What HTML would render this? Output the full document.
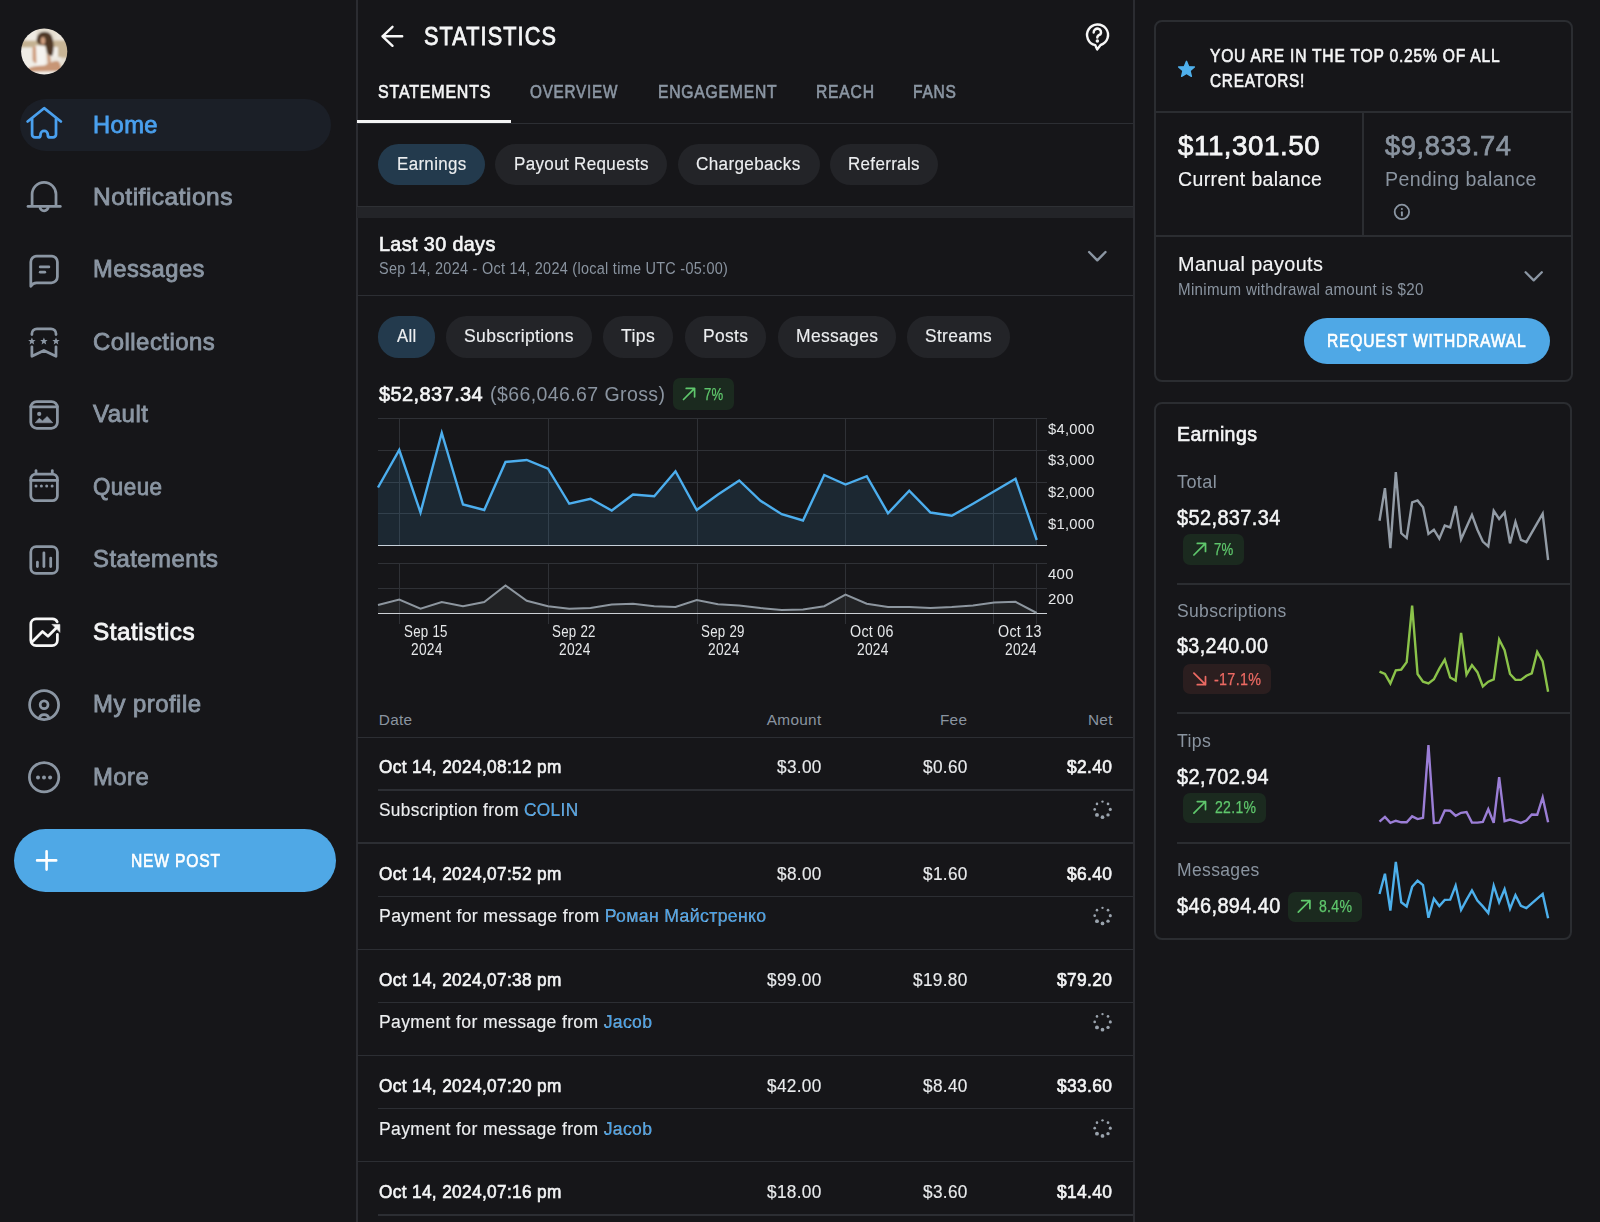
<!DOCTYPE html>
<html><head><meta charset="utf-8"><title>Statistics</title><style>*{margin:0;padding:0}
html,body{width:1600px;height:1222px;overflow:hidden;background:#161619}
body{position:relative;font-family:"Liberation Sans",sans-serif}
.t{position:absolute;white-space:nowrap}
.r{position:absolute}
svg{position:absolute;left:0;top:0}
</style></head><body>
<div class="r" style="left:19.50px;top:99.00px;width:311.00px;height:51.50px;background:#1b1f27;border-radius:26.00px;"></div>
<div class="t" style="left:93.20px;top:112.51px;font-size:24.44px;line-height:24.44px;color:#4aa0ee;font-weight:normal;letter-spacing:0.489px;transform:scaleX(0.9674);transform-origin:0.00px 0;-webkit-text-stroke:0.85px #4aa0ee;">Home</div>
<div class="t" style="left:93.20px;top:184.96px;font-size:24.44px;line-height:24.44px;color:#8b96a3;font-weight:normal;letter-spacing:0.489px;transform:scaleX(1.0036);transform-origin:0.00px 0;-webkit-text-stroke:0.85px #8b96a3;">Notifications</div>
<div class="t" style="left:93.20px;top:257.41px;font-size:24.44px;line-height:24.44px;color:#8b96a3;font-weight:normal;letter-spacing:0.489px;transform:scaleX(0.9710);transform-origin:0.00px 0;-webkit-text-stroke:0.85px #8b96a3;">Messages</div>
<div class="t" style="left:93.20px;top:329.86px;font-size:24.44px;line-height:24.44px;color:#8b96a3;font-weight:normal;letter-spacing:0.489px;transform:scaleX(0.9789);transform-origin:0.00px 0;-webkit-text-stroke:0.85px #8b96a3;">Collections</div>
<div class="t" style="left:93.20px;top:402.31px;font-size:24.44px;line-height:24.44px;color:#8b96a3;font-weight:normal;letter-spacing:0.489px;transform:scaleX(0.9848);transform-origin:0.00px 0;-webkit-text-stroke:0.85px #8b96a3;">Vault</div>
<div class="t" style="left:93.20px;top:474.76px;font-size:24.44px;line-height:24.44px;color:#8b96a3;font-weight:normal;letter-spacing:0.489px;transform:scaleX(0.9160);transform-origin:0.00px 0;-webkit-text-stroke:0.85px #8b96a3;">Queue</div>
<div class="t" style="left:93.20px;top:547.21px;font-size:24.44px;line-height:24.44px;color:#8b96a3;font-weight:normal;letter-spacing:0.489px;transform:scaleX(0.9764);transform-origin:0.00px 0;-webkit-text-stroke:0.85px #8b96a3;">Statements</div>
<div class="t" style="left:93.20px;top:619.66px;font-size:24.44px;line-height:24.44px;color:#f4f5f6;font-weight:normal;letter-spacing:0.489px;transform:scaleX(0.9942);transform-origin:0.00px 0;-webkit-text-stroke:0.85px #f4f5f6;">Statistics</div>
<div class="t" style="left:93.20px;top:692.11px;font-size:24.44px;line-height:24.44px;color:#8b96a3;font-weight:normal;letter-spacing:0.489px;transform:scaleX(0.9787);transform-origin:0.00px 0;-webkit-text-stroke:0.85px #8b96a3;">My profile</div>
<div class="t" style="left:93.20px;top:764.56px;font-size:24.44px;line-height:24.44px;color:#8b96a3;font-weight:normal;letter-spacing:0.489px;transform:scaleX(0.9765);transform-origin:0.00px 0;-webkit-text-stroke:0.85px #8b96a3;">More</div>
<div class="r" style="left:14.00px;top:829.00px;width:322.00px;height:63.00px;background:#4fa8e6;border-radius:32.00px;"></div>
<div class="t" style="left:131.40px;top:850.72px;font-size:18.99px;line-height:18.99px;color:#ffffff;font-weight:normal;letter-spacing:0.950px;transform:scaleX(0.8243);transform-origin:0.00px 0;-webkit-text-stroke:0.65px #ffffff;">NEW POST</div>
<div class="r" style="left:356.00px;top:0.00px;width:2.00px;height:1222.00px;background:#2b2c31;border-radius:0.00px;"></div>
<div class="t" style="left:424.25px;top:23.72px;font-size:25.14px;line-height:25.14px;color:#f4f5f6;font-weight:normal;letter-spacing:1.257px;transform:scaleX(0.8636);transform-origin:0.00px 0;-webkit-text-stroke:0.85px #f4f5f6;">STATISTICS</div>
<div class="t" style="left:377.50px;top:82.63px;font-size:18.16px;line-height:18.16px;color:#f4f5f6;font-weight:normal;letter-spacing:0.908px;transform:scaleX(0.8821);transform-origin:0.00px 0;-webkit-text-stroke:0.65px #f4f5f6;">STATEMENTS</div>
<div class="t" style="left:530.00px;top:82.63px;font-size:18.16px;line-height:18.16px;color:#8b96a3;font-weight:normal;letter-spacing:0.908px;transform:scaleX(0.8422);transform-origin:0.00px 0;-webkit-text-stroke:0.65px #8b96a3;">OVERVIEW</div>
<div class="t" style="left:657.50px;top:82.63px;font-size:18.16px;line-height:18.16px;color:#8b96a3;font-weight:normal;letter-spacing:0.908px;transform:scaleX(0.8645);transform-origin:0.00px 0;-webkit-text-stroke:0.65px #8b96a3;">ENGAGEMENT</div>
<div class="t" style="left:815.75px;top:82.63px;font-size:18.16px;line-height:18.16px;color:#8b96a3;font-weight:normal;letter-spacing:0.908px;transform:scaleX(0.8631);transform-origin:0.00px 0;-webkit-text-stroke:0.65px #8b96a3;">REACH</div>
<div class="t" style="left:913.25px;top:82.63px;font-size:18.16px;line-height:18.16px;color:#8b96a3;font-weight:normal;letter-spacing:0.908px;transform:scaleX(0.8575);transform-origin:0.00px 0;-webkit-text-stroke:0.65px #8b96a3;">FANS</div>
<div class="r" style="left:357.00px;top:123.00px;width:777.00px;height:1.00px;background:#2c2e33;border-radius:0.00px;"></div>
<div class="r" style="left:357.00px;top:120.00px;width:153.50px;height:3.00px;background:#f4f4f4;border-radius:0.00px;"></div>
<div class="r" style="left:378.00px;top:144.00px;width:106.50px;height:41.00px;background:#233a4d;border-radius:20.50px;"></div>
<div class="t" style="left:397.00px;top:154.79px;font-size:18.85px;line-height:18.85px;color:#eceef0;font-weight:normal;letter-spacing:0.377px;transform:scaleX(0.8987);transform-origin:0.00px 0;-webkit-text-stroke:0.15px #eceef0;">Earnings</div>
<div class="r" style="left:495.00px;top:144.00px;width:172.00px;height:41.00px;background:#232428;border-radius:20.50px;"></div>
<div class="t" style="left:513.75px;top:154.79px;font-size:18.85px;line-height:18.85px;color:#eceef0;font-weight:normal;letter-spacing:0.377px;transform:scaleX(0.9034);transform-origin:0.00px 0;-webkit-text-stroke:0.15px #eceef0;">Payout Requests</div>
<div class="r" style="left:677.50px;top:144.00px;width:142.00px;height:41.00px;background:#232428;border-radius:20.50px;"></div>
<div class="t" style="left:696.25px;top:154.79px;font-size:18.85px;line-height:18.85px;color:#eceef0;font-weight:normal;letter-spacing:0.377px;transform:scaleX(0.9076);transform-origin:0.00px 0;-webkit-text-stroke:0.15px #eceef0;">Chargebacks</div>
<div class="r" style="left:830.00px;top:144.00px;width:108.00px;height:41.00px;background:#232428;border-radius:20.50px;"></div>
<div class="t" style="left:848.00px;top:154.79px;font-size:18.85px;line-height:18.85px;color:#eceef0;font-weight:normal;letter-spacing:0.377px;transform:scaleX(0.8993);transform-origin:0.00px 0;-webkit-text-stroke:0.15px #eceef0;">Referrals</div>
<div class="r" style="left:357.00px;top:205.50px;width:777.00px;height:12.50px;background:#232428;border-radius:0.00px;"></div>
<div class="r" style="left:357.00px;top:205.50px;width:777.00px;height:1.00px;background:#2e3034;border-radius:0.00px;"></div>
<div class="t" style="left:378.75px;top:233.61px;font-size:20.25px;line-height:20.25px;color:#f4f5f6;font-weight:normal;letter-spacing:0.405px;transform:scaleX(0.9746);transform-origin:0.00px 0;-webkit-text-stroke:0.65px #f4f5f6;">Last 30 days</div>
<div class="t" style="left:378.75px;top:260.81px;font-size:16.76px;line-height:16.76px;color:#8a94a0;font-weight:normal;letter-spacing:0.335px;transform:scaleX(0.8613);transform-origin:0.00px 0;">Sep 14, 2024 - Oct 14, 2024 (local time UTC -05:00)</div>
<div class="r" style="left:357.00px;top:294.50px;width:777.00px;height:1.00px;background:#2c2e33;border-radius:0.00px;"></div>
<div class="r" style="left:378.00px;top:316.25px;width:57.00px;height:41.25px;background:#233a4d;border-radius:20.62px;"></div>
<div class="t" style="left:397.00px;top:327.04px;font-size:18.85px;line-height:18.85px;color:#eceef0;font-weight:normal;letter-spacing:0.377px;transform:scaleX(0.8870);transform-origin:0.00px 0;-webkit-text-stroke:0.15px #eceef0;">All</div>
<div class="r" style="left:446.25px;top:316.25px;width:145.75px;height:41.25px;background:#232428;border-radius:20.62px;"></div>
<div class="t" style="left:464.25px;top:327.04px;font-size:18.85px;line-height:18.85px;color:#eceef0;font-weight:normal;letter-spacing:0.377px;transform:scaleX(0.9303);transform-origin:0.00px 0;-webkit-text-stroke:0.15px #eceef0;">Subscriptions</div>
<div class="r" style="left:602.50px;top:316.25px;width:70.75px;height:41.25px;background:#232428;border-radius:20.62px;"></div>
<div class="t" style="left:621.25px;top:327.04px;font-size:18.85px;line-height:18.85px;color:#eceef0;font-weight:normal;letter-spacing:0.377px;transform:scaleX(0.9362);transform-origin:0.00px 0;-webkit-text-stroke:0.15px #eceef0;">Tips</div>
<div class="r" style="left:684.50px;top:316.25px;width:81.75px;height:41.25px;background:#232428;border-radius:20.62px;"></div>
<div class="t" style="left:703.00px;top:327.04px;font-size:18.85px;line-height:18.85px;color:#eceef0;font-weight:normal;letter-spacing:0.377px;transform:scaleX(0.9247);transform-origin:0.00px 0;-webkit-text-stroke:0.15px #eceef0;">Posts</div>
<div class="r" style="left:777.50px;top:316.25px;width:118.75px;height:41.25px;background:#232428;border-radius:20.62px;"></div>
<div class="t" style="left:795.50px;top:327.04px;font-size:18.85px;line-height:18.85px;color:#eceef0;font-weight:normal;letter-spacing:0.377px;transform:scaleX(0.9257);transform-origin:0.00px 0;-webkit-text-stroke:0.15px #eceef0;">Messages</div>
<div class="r" style="left:907.00px;top:316.25px;width:103.00px;height:41.25px;background:#232428;border-radius:20.62px;"></div>
<div class="t" style="left:925.00px;top:327.04px;font-size:18.85px;line-height:18.85px;color:#eceef0;font-weight:normal;letter-spacing:0.377px;transform:scaleX(0.9212);transform-origin:0.00px 0;-webkit-text-stroke:0.15px #eceef0;">Streams</div>
<div class="t" style="left:378.75px;top:383.61px;font-size:20.25px;line-height:20.25px;color:#f4f5f6;font-weight:normal;letter-spacing:0.405px;transform:scaleX(0.9881);transform-origin:0.00px 0;-webkit-text-stroke:0.65px #f4f5f6;">$52,837.34</div>
<div class="t" style="left:490.00px;top:383.61px;font-size:20.25px;line-height:20.25px;color:#8a94a0;font-weight:normal;letter-spacing:0.405px;transform:scaleX(0.9649);transform-origin:0.00px 0;">($66,046.67 Gross)</div>
<div class="r" style="left:672.50px;top:378.00px;width:61.25px;height:31.50px;background:#1b2a1f;border-radius:7.00px;"></div>
<div class="t" style="left:703.75px;top:385.54px;font-size:16.20px;line-height:16.20px;color:#5fc76c;font-weight:normal;letter-spacing:0.324px;transform:scaleX(0.8111);transform-origin:0.00px 0;-webkit-text-stroke:0.25px #5fc76c;">7%</div>
<div class="r" style="left:378.00px;top:418.25px;width:669.00px;height:1.00px;background:#2f3136;border-radius:0.00px;"></div>
<div class="r" style="left:378.00px;top:449.50px;width:669.00px;height:1.00px;background:#2f3136;border-radius:0.00px;"></div>
<div class="r" style="left:378.00px;top:481.50px;width:669.00px;height:1.00px;background:#2f3136;border-radius:0.00px;"></div>
<div class="r" style="left:378.00px;top:513.25px;width:669.00px;height:1.00px;background:#2f3136;border-radius:0.00px;"></div>
<div class="r" style="left:399.00px;top:418.75px;width:1.00px;height:126.75px;background:#2f3136;border-radius:0.00px;"></div>
<div class="r" style="left:547.50px;top:418.75px;width:1.00px;height:126.75px;background:#2f3136;border-radius:0.00px;"></div>
<div class="r" style="left:696.50px;top:418.75px;width:1.00px;height:126.75px;background:#2f3136;border-radius:0.00px;"></div>
<div class="r" style="left:845.00px;top:418.75px;width:1.00px;height:126.75px;background:#2f3136;border-radius:0.00px;"></div>
<div class="r" style="left:993.25px;top:418.75px;width:1.00px;height:126.75px;background:#2f3136;border-radius:0.00px;"></div>
<div class="r" style="left:1036.25px;top:418.75px;width:1.00px;height:126.75px;background:#2f3136;border-radius:0.00px;"></div>
<div class="r" style="left:378.00px;top:544.80px;width:669.00px;height:1.60px;background:#cfd3d8;border-radius:0.00px;"></div>
<div class="t" style="left:1047.50px;top:420.83px;font-size:15.08px;line-height:15.08px;color:#e6e8ea;font-weight:normal;letter-spacing:0.302px;transform:scaleX(0.9759);transform-origin:0.00px 0;">$4,000</div>
<div class="t" style="left:1047.50px;top:452.33px;font-size:15.08px;line-height:15.08px;color:#e6e8ea;font-weight:normal;letter-spacing:0.302px;transform:scaleX(0.9759);transform-origin:0.00px 0;">$3,000</div>
<div class="t" style="left:1047.50px;top:484.33px;font-size:15.08px;line-height:15.08px;color:#e6e8ea;font-weight:normal;letter-spacing:0.302px;transform:scaleX(0.9759);transform-origin:0.00px 0;">$2,000</div>
<div class="t" style="left:1047.50px;top:515.83px;font-size:15.08px;line-height:15.08px;color:#e6e8ea;font-weight:normal;letter-spacing:0.302px;transform:scaleX(0.9759);transform-origin:0.00px 0;">$1,000</div>
<div class="r" style="left:378.00px;top:563.25px;width:669.00px;height:1.00px;background:#2f3136;border-radius:0.00px;"></div>
<div class="r" style="left:378.00px;top:588.25px;width:669.00px;height:1.00px;background:#2f3136;border-radius:0.00px;"></div>
<div class="r" style="left:399.00px;top:563.75px;width:1.00px;height:60.00px;background:#2f3136;border-radius:0.00px;"></div>
<div class="r" style="left:547.50px;top:563.75px;width:1.00px;height:60.00px;background:#2f3136;border-radius:0.00px;"></div>
<div class="r" style="left:696.50px;top:563.75px;width:1.00px;height:60.00px;background:#2f3136;border-radius:0.00px;"></div>
<div class="r" style="left:845.00px;top:563.75px;width:1.00px;height:60.00px;background:#2f3136;border-radius:0.00px;"></div>
<div class="r" style="left:993.25px;top:563.75px;width:1.00px;height:60.00px;background:#2f3136;border-radius:0.00px;"></div>
<div class="r" style="left:1036.25px;top:563.75px;width:1.00px;height:60.00px;background:#2f3136;border-radius:0.00px;"></div>
<div class="r" style="left:378.00px;top:612.50px;width:669.00px;height:1.60px;background:#cfd3d8;border-radius:0.00px;"></div>
<div class="t" style="left:1047.50px;top:566.38px;font-size:15.08px;line-height:15.08px;color:#e6e8ea;font-weight:normal;letter-spacing:0.302px;transform:scaleX(0.9898);transform-origin:0.00px 0;">400</div>
<div class="t" style="left:1047.50px;top:591.38px;font-size:15.08px;line-height:15.08px;color:#e6e8ea;font-weight:normal;letter-spacing:0.302px;transform:scaleX(0.9898);transform-origin:0.00px 0;">200</div>
<div class="t" style="left:403.75px;top:624.26px;font-size:15.64px;line-height:15.64px;color:#e6e8ea;font-weight:normal;letter-spacing:0.313px;transform:scaleX(0.8507);transform-origin:0.00px 0;">Sep 15</div>
<div class="t" style="left:410.75px;top:641.76px;font-size:15.64px;line-height:15.64px;color:#e6e8ea;font-weight:normal;letter-spacing:0.313px;transform:scaleX(0.8813);transform-origin:0.00px 0;">2024</div>
<div class="t" style="left:552.00px;top:624.26px;font-size:15.64px;line-height:15.64px;color:#e6e8ea;font-weight:normal;letter-spacing:0.313px;transform:scaleX(0.8507);transform-origin:0.00px 0;">Sep 22</div>
<div class="t" style="left:559.00px;top:641.76px;font-size:15.64px;line-height:15.64px;color:#e6e8ea;font-weight:normal;letter-spacing:0.313px;transform:scaleX(0.8813);transform-origin:0.00px 0;">2024</div>
<div class="t" style="left:700.75px;top:624.26px;font-size:15.64px;line-height:15.64px;color:#e6e8ea;font-weight:normal;letter-spacing:0.313px;transform:scaleX(0.8507);transform-origin:0.00px 0;">Sep 29</div>
<div class="t" style="left:707.75px;top:641.76px;font-size:15.64px;line-height:15.64px;color:#e6e8ea;font-weight:normal;letter-spacing:0.313px;transform:scaleX(0.8813);transform-origin:0.00px 0;">2024</div>
<div class="t" style="left:849.50px;top:624.26px;font-size:15.64px;line-height:15.64px;color:#e6e8ea;font-weight:normal;letter-spacing:0.313px;transform:scaleX(0.9130);transform-origin:0.00px 0;">Oct 06</div>
<div class="t" style="left:856.50px;top:641.76px;font-size:15.64px;line-height:15.64px;color:#e6e8ea;font-weight:normal;letter-spacing:0.313px;transform:scaleX(0.8813);transform-origin:0.00px 0;">2024</div>
<div class="t" style="left:998.25px;top:624.26px;font-size:15.64px;line-height:15.64px;color:#e6e8ea;font-weight:normal;letter-spacing:0.313px;transform:scaleX(0.9130);transform-origin:0.00px 0;">Oct 13</div>
<div class="t" style="left:1005.25px;top:641.76px;font-size:15.64px;line-height:15.64px;color:#e6e8ea;font-weight:normal;letter-spacing:0.313px;transform:scaleX(0.8813);transform-origin:0.00px 0;">2024</div>
<div class="t" style="left:378.75px;top:711.50px;font-size:15.36px;line-height:15.36px;color:#8a94a0;font-weight:normal;letter-spacing:0.307px;">Date</div>
<div class="t" style="left:766.77px;top:711.50px;font-size:15.36px;line-height:15.36px;color:#8a94a0;font-weight:normal;letter-spacing:0.307px;">Amount</div>
<div class="t" style="left:939.91px;top:711.50px;font-size:15.36px;line-height:15.36px;color:#8a94a0;font-weight:normal;letter-spacing:0.307px;">Fee</div>
<div class="t" style="left:1087.98px;top:711.50px;font-size:15.36px;line-height:15.36px;color:#8a94a0;font-weight:normal;letter-spacing:0.307px;">Net</div>
<div class="r" style="left:357.00px;top:736.90px;width:777.00px;height:1.20px;background:#2c2e33;border-radius:0.00px;"></div>
<div class="t" style="left:378.75px;top:757.49px;font-size:19.20px;line-height:19.20px;color:#f4f5f6;font-weight:normal;letter-spacing:0.384px;transform:scaleX(0.8988);transform-origin:0.00px 0;-webkit-text-stroke:0.65px #f4f5f6;">Oct 14, 2024,08:12 pm</div>
<div class="t" style="left:776.85px;top:757.49px;font-size:19.20px;line-height:19.20px;color:#e9ebed;font-weight:normal;letter-spacing:0.384px;transform:scaleX(0.8954);transform-origin:0.00px 0;-webkit-text-stroke:0.15px #e9ebed;">$3.00</div>
<div class="t" style="left:922.60px;top:757.49px;font-size:19.20px;line-height:19.20px;color:#e9ebed;font-weight:normal;letter-spacing:0.384px;transform:scaleX(0.8954);transform-origin:0.00px 0;-webkit-text-stroke:0.15px #e9ebed;">$0.60</div>
<div class="t" style="left:1067.00px;top:757.49px;font-size:19.20px;line-height:19.20px;color:#f4f5f6;font-weight:normal;letter-spacing:0.384px;transform:scaleX(0.9075);transform-origin:0.00px 0;-webkit-text-stroke:0.65px #f4f5f6;">$2.40</div>
<div class="r" style="left:378.00px;top:789.40px;width:756.00px;height:1.20px;background:#2c2e33;border-radius:0.00px;"></div>
<div class="t" style="left:378.75px;top:799.99px;font-size:19.20px;line-height:19.20px;color:#f4f5f6;font-weight:normal;letter-spacing:0.384px;transform:scaleX(0.8979);transform-origin:0.00px 0;-webkit-text-stroke:0.15px #f4f5f6;"><span style="color:#eceef0">Subscription from </span><span style="color:#41a0ea">COLIN</span></div>
<div class="r" style="left:357.00px;top:842.40px;width:777.00px;height:1.20px;background:#2c2e33;border-radius:0.00px;"></div>
<div class="t" style="left:378.75px;top:863.74px;font-size:19.20px;line-height:19.20px;color:#f4f5f6;font-weight:normal;letter-spacing:0.384px;transform:scaleX(0.8988);transform-origin:0.00px 0;-webkit-text-stroke:0.65px #f4f5f6;">Oct 14, 2024,07:52 pm</div>
<div class="t" style="left:776.85px;top:863.74px;font-size:19.20px;line-height:19.20px;color:#e9ebed;font-weight:normal;letter-spacing:0.384px;transform:scaleX(0.8954);transform-origin:0.00px 0;-webkit-text-stroke:0.15px #e9ebed;">$8.00</div>
<div class="t" style="left:922.60px;top:863.74px;font-size:19.20px;line-height:19.20px;color:#e9ebed;font-weight:normal;letter-spacing:0.384px;transform:scaleX(0.8954);transform-origin:0.00px 0;-webkit-text-stroke:0.15px #e9ebed;">$1.60</div>
<div class="t" style="left:1067.00px;top:863.74px;font-size:19.20px;line-height:19.20px;color:#f4f5f6;font-weight:normal;letter-spacing:0.384px;transform:scaleX(0.9075);transform-origin:0.00px 0;-webkit-text-stroke:0.65px #f4f5f6;">$6.40</div>
<div class="r" style="left:378.00px;top:895.65px;width:756.00px;height:1.20px;background:#2c2e33;border-radius:0.00px;"></div>
<div class="t" style="left:378.75px;top:906.24px;font-size:19.20px;line-height:19.20px;color:#f4f5f6;font-weight:normal;letter-spacing:0.384px;transform:scaleX(0.9205);transform-origin:0.00px 0;-webkit-text-stroke:0.15px #f4f5f6;"><span style="color:#eceef0">Payment for message from </span><span style="color:#41a0ea">Роман Майстренко</span></div>
<div class="r" style="left:357.00px;top:948.65px;width:777.00px;height:1.20px;background:#2c2e33;border-radius:0.00px;"></div>
<div class="t" style="left:378.75px;top:969.99px;font-size:19.20px;line-height:19.20px;color:#f4f5f6;font-weight:normal;letter-spacing:0.384px;transform:scaleX(0.8988);transform-origin:0.00px 0;-webkit-text-stroke:0.65px #f4f5f6;">Oct 14, 2024,07:38 pm</div>
<div class="t" style="left:766.85px;top:969.99px;font-size:19.20px;line-height:19.20px;color:#e9ebed;font-weight:normal;letter-spacing:0.384px;transform:scaleX(0.8967);transform-origin:0.00px 0;-webkit-text-stroke:0.15px #e9ebed;">$99.00</div>
<div class="t" style="left:912.60px;top:969.99px;font-size:19.20px;line-height:19.20px;color:#e9ebed;font-weight:normal;letter-spacing:0.384px;transform:scaleX(0.8967);transform-origin:0.00px 0;-webkit-text-stroke:0.15px #e9ebed;">$19.80</div>
<div class="t" style="left:1057.00px;top:969.99px;font-size:19.20px;line-height:19.20px;color:#f4f5f6;font-weight:normal;letter-spacing:0.384px;transform:scaleX(0.9066);transform-origin:0.00px 0;-webkit-text-stroke:0.65px #f4f5f6;">$79.20</div>
<div class="r" style="left:378.00px;top:1001.90px;width:756.00px;height:1.20px;background:#2c2e33;border-radius:0.00px;"></div>
<div class="t" style="left:378.75px;top:1012.49px;font-size:19.20px;line-height:19.20px;color:#f4f5f6;font-weight:normal;letter-spacing:0.384px;transform:scaleX(0.9162);transform-origin:0.00px 0;-webkit-text-stroke:0.15px #f4f5f6;"><span style="color:#eceef0">Payment for message from </span><span style="color:#41a0ea">Jacob</span></div>
<div class="r" style="left:357.00px;top:1054.90px;width:777.00px;height:1.20px;background:#2c2e33;border-radius:0.00px;"></div>
<div class="t" style="left:378.75px;top:1076.24px;font-size:19.20px;line-height:19.20px;color:#f4f5f6;font-weight:normal;letter-spacing:0.384px;transform:scaleX(0.8988);transform-origin:0.00px 0;-webkit-text-stroke:0.65px #f4f5f6;">Oct 14, 2024,07:20 pm</div>
<div class="t" style="left:766.85px;top:1076.24px;font-size:19.20px;line-height:19.20px;color:#e9ebed;font-weight:normal;letter-spacing:0.384px;transform:scaleX(0.8967);transform-origin:0.00px 0;-webkit-text-stroke:0.15px #e9ebed;">$42.00</div>
<div class="t" style="left:922.60px;top:1076.24px;font-size:19.20px;line-height:19.20px;color:#e9ebed;font-weight:normal;letter-spacing:0.384px;transform:scaleX(0.8954);transform-origin:0.00px 0;-webkit-text-stroke:0.15px #e9ebed;">$8.40</div>
<div class="t" style="left:1057.00px;top:1076.24px;font-size:19.20px;line-height:19.20px;color:#f4f5f6;font-weight:normal;letter-spacing:0.384px;transform:scaleX(0.9066);transform-origin:0.00px 0;-webkit-text-stroke:0.65px #f4f5f6;">$33.60</div>
<div class="r" style="left:378.00px;top:1108.15px;width:756.00px;height:1.20px;background:#2c2e33;border-radius:0.00px;"></div>
<div class="t" style="left:378.75px;top:1118.74px;font-size:19.20px;line-height:19.20px;color:#f4f5f6;font-weight:normal;letter-spacing:0.384px;transform:scaleX(0.9162);transform-origin:0.00px 0;-webkit-text-stroke:0.15px #f4f5f6;"><span style="color:#eceef0">Payment for message from </span><span style="color:#41a0ea">Jacob</span></div>
<div class="r" style="left:357.00px;top:1161.15px;width:777.00px;height:1.20px;background:#2c2e33;border-radius:0.00px;"></div>
<div class="t" style="left:378.75px;top:1182.49px;font-size:19.20px;line-height:19.20px;color:#f4f5f6;font-weight:normal;letter-spacing:0.384px;transform:scaleX(0.8988);transform-origin:0.00px 0;-webkit-text-stroke:0.65px #f4f5f6;">Oct 14, 2024,07:16 pm</div>
<div class="t" style="left:766.85px;top:1182.49px;font-size:19.20px;line-height:19.20px;color:#e9ebed;font-weight:normal;letter-spacing:0.384px;transform:scaleX(0.8967);transform-origin:0.00px 0;-webkit-text-stroke:0.15px #e9ebed;">$18.00</div>
<div class="t" style="left:922.60px;top:1182.49px;font-size:19.20px;line-height:19.20px;color:#e9ebed;font-weight:normal;letter-spacing:0.384px;transform:scaleX(0.8954);transform-origin:0.00px 0;-webkit-text-stroke:0.15px #e9ebed;">$3.60</div>
<div class="t" style="left:1057.00px;top:1182.49px;font-size:19.20px;line-height:19.20px;color:#f4f5f6;font-weight:normal;letter-spacing:0.384px;transform:scaleX(0.9066);transform-origin:0.00px 0;-webkit-text-stroke:0.65px #f4f5f6;">$14.40</div>
<div class="r" style="left:378.00px;top:1214.40px;width:756.00px;height:1.20px;background:#2c2e33;border-radius:0.00px;"></div>
<div class="r" style="left:1133.35px;top:0.00px;width:1.30px;height:1222.00px;background:#2b2c31;border-radius:0.00px;"></div>
<div class="r" style="left:1154.00px;top:20.30px;width:418.80px;height:362.00px;background:transparent;border-radius:8.00px;border:2px solid #2b2d31;box-sizing:border-box;"></div>
<div class="t" style="left:1210.20px;top:45.88px;font-size:19.27px;line-height:19.27px;color:#f4f5f6;font-weight:normal;letter-spacing:0.964px;transform:scaleX(0.8105);transform-origin:0.00px 0;-webkit-text-stroke:0.65px #f4f5f6;">YOU ARE IN THE TOP 0.25% OF ALL</div>
<div class="t" style="left:1210.20px;top:71.38px;font-size:19.27px;line-height:19.27px;color:#f4f5f6;font-weight:normal;letter-spacing:0.964px;transform:scaleX(0.7966);transform-origin:0.00px 0;-webkit-text-stroke:0.65px #f4f5f6;">CREATORS!</div>
<div class="r" style="left:1155.00px;top:111.00px;width:417.00px;height:2.00px;background:#2b2d31;border-radius:0.00px;"></div>
<div class="r" style="left:1362.00px;top:112.00px;width:2.00px;height:124.30px;background:#2b2d31;border-radius:0.00px;"></div>
<div class="t" style="left:1177.50px;top:130.50px;font-size:28.35px;line-height:28.35px;color:#f4f5f6;font-weight:normal;letter-spacing:0.567px;transform:scaleX(0.9779);transform-origin:0.00px 0;-webkit-text-stroke:0.75px #f4f5f6;">$11,301.50</div>
<div class="t" style="left:1177.50px;top:168.52px;font-size:20.53px;line-height:20.53px;color:#f4f5f6;font-weight:normal;letter-spacing:0.411px;transform:scaleX(0.9485);transform-origin:0.00px 0;-webkit-text-stroke:0.15px #f4f5f6;">Current balance</div>
<div class="t" style="left:1385.30px;top:130.50px;font-size:28.35px;line-height:28.35px;color:#8a94a0;font-weight:normal;letter-spacing:0.567px;transform:scaleX(0.9642);transform-origin:0.00px 0;-webkit-text-stroke:0.75px #8a94a0;">$9,833.74</div>
<div class="t" style="left:1385.30px;top:168.52px;font-size:20.53px;line-height:20.53px;color:#8a94a0;font-weight:normal;letter-spacing:0.411px;transform:scaleX(0.9551);transform-origin:0.00px 0;">Pending balance</div>
<div class="r" style="left:1155.00px;top:235.30px;width:417.00px;height:2.00px;background:#2b2d31;border-radius:0.00px;"></div>
<div class="t" style="left:1177.50px;top:253.62px;font-size:20.53px;line-height:20.53px;color:#f4f5f6;font-weight:normal;letter-spacing:0.411px;transform:scaleX(0.9648);transform-origin:0.00px 0;-webkit-text-stroke:0.15px #f4f5f6;">Manual payouts</div>
<div class="t" style="left:1177.50px;top:281.00px;font-size:16.06px;line-height:16.06px;color:#8a94a0;font-weight:normal;letter-spacing:0.321px;transform:scaleX(0.9414);transform-origin:0.00px 0;">Minimum withdrawal amount is $20</div>
<div class="r" style="left:1304.00px;top:317.50px;width:245.60px;height:46.50px;background:#4fa8e6;border-radius:23.25px;"></div>
<div class="t" style="left:1327.40px;top:331.63px;font-size:18.16px;line-height:18.16px;color:#ffffff;font-weight:normal;letter-spacing:0.908px;transform:scaleX(0.8611);transform-origin:0.00px 0;-webkit-text-stroke:0.65px #ffffff;">REQUEST WITHDRAWAL</div>
<div class="r" style="left:1154.00px;top:402.20px;width:418.20px;height:538.20px;background:transparent;border-radius:8.00px;border:2px solid #2b2d31;box-sizing:border-box;"></div>
<div class="t" style="left:1177.00px;top:424.02px;font-size:20.53px;line-height:20.53px;color:#f4f5f6;font-weight:normal;letter-spacing:0.411px;transform:scaleX(0.9534);transform-origin:0.00px 0;-webkit-text-stroke:0.65px #f4f5f6;">Earnings</div>
<div class="t" style="left:1177.00px;top:472.08px;font-size:19.27px;line-height:19.27px;color:#8a94a0;font-weight:normal;letter-spacing:0.385px;transform:scaleX(0.9397);transform-origin:0.00px 0;">Total</div>
<div class="t" style="left:1177.00px;top:507.61px;font-size:21.37px;line-height:21.37px;color:#f4f5f6;font-weight:normal;letter-spacing:0.427px;transform:scaleX(0.9332);transform-origin:0.00px 0;-webkit-text-stroke:0.50px #f4f5f6;">$52,837.34</div>
<div class="r" style="left:1183.40px;top:534.00px;width:60.60px;height:30.80px;background:#1b2a1f;border-radius:7.00px;"></div>
<div class="t" style="left:1214.40px;top:541.29px;font-size:16.20px;line-height:16.20px;color:#5fc76c;font-weight:normal;letter-spacing:0.324px;transform:scaleX(0.8153);transform-origin:0.00px 0;-webkit-text-stroke:0.25px #5fc76c;">7%</div>
<div class="t" style="left:1177.00px;top:601.38px;font-size:19.27px;line-height:19.27px;color:#8a94a0;font-weight:normal;letter-spacing:0.385px;transform:scaleX(0.9084);transform-origin:0.00px 0;">Subscriptions</div>
<div class="t" style="left:1177.00px;top:636.31px;font-size:21.37px;line-height:21.37px;color:#f4f5f6;font-weight:normal;letter-spacing:0.427px;transform:scaleX(0.9240);transform-origin:0.00px 0;-webkit-text-stroke:0.50px #f4f5f6;">$3,240.00</div>
<div class="r" style="left:1183.40px;top:663.60px;width:87.60px;height:30.80px;background:#2b1e1f;border-radius:7.00px;"></div>
<div class="t" style="left:1214.00px;top:670.99px;font-size:16.20px;line-height:16.20px;color:#ec6a63;font-weight:normal;letter-spacing:0.324px;transform:scaleX(0.8877);transform-origin:0.00px 0;-webkit-text-stroke:0.25px #ec6a63;">-17.1%</div>
<div class="t" style="left:1177.00px;top:730.68px;font-size:19.27px;line-height:19.27px;color:#8a94a0;font-weight:normal;letter-spacing:0.385px;transform:scaleX(0.9172);transform-origin:0.00px 0;">Tips</div>
<div class="t" style="left:1177.00px;top:767.11px;font-size:21.37px;line-height:21.37px;color:#f4f5f6;font-weight:normal;letter-spacing:0.427px;transform:scaleX(0.9311);transform-origin:0.00px 0;-webkit-text-stroke:0.50px #f4f5f6;">$2,702.94</div>
<div class="r" style="left:1183.40px;top:793.40px;width:82.30px;height:30.00px;background:#1b2a1f;border-radius:7.00px;"></div>
<div class="t" style="left:1214.60px;top:799.39px;font-size:16.20px;line-height:16.20px;color:#5fc76c;font-weight:normal;letter-spacing:0.324px;transform:scaleX(0.8682);transform-origin:0.00px 0;-webkit-text-stroke:0.25px #5fc76c;">22.1%</div>
<div class="t" style="left:1177.00px;top:860.48px;font-size:19.27px;line-height:19.27px;color:#8a94a0;font-weight:normal;letter-spacing:0.385px;transform:scaleX(0.9089);transform-origin:0.00px 0;">Messages</div>
<div class="t" style="left:1177.00px;top:896.41px;font-size:21.37px;line-height:21.37px;color:#f4f5f6;font-weight:normal;letter-spacing:0.427px;transform:scaleX(0.9332);transform-origin:0.00px 0;-webkit-text-stroke:0.50px #f4f5f6;">$46,894.40</div>
<div class="r" style="left:1287.80px;top:891.50px;width:74.20px;height:30.90px;background:#1b2a1f;border-radius:7.00px;"></div>
<div class="t" style="left:1318.90px;top:898.39px;font-size:16.20px;line-height:16.20px;color:#5fc76c;font-weight:normal;letter-spacing:0.324px;transform:scaleX(0.8708);transform-origin:0.00px 0;-webkit-text-stroke:0.25px #5fc76c;">8.4%</div>
<div class="r" style="left:1177.00px;top:582.90px;width:394.00px;height:2.00px;background:#2b2d31;border-radius:0.00px;"></div>
<div class="r" style="left:1177.00px;top:712.10px;width:394.00px;height:2.00px;background:#2b2d31;border-radius:0.00px;"></div>
<div class="r" style="left:1177.00px;top:842.10px;width:394.00px;height:2.00px;background:#2b2d31;border-radius:0.00px;"></div>
<svg width="1600" height="1222" viewBox="0 0 1600 1222">
<defs><clipPath id="av"><circle cx="44.2" cy="51.5" r="23.1"/></clipPath>
<filter id="avb" x="-10%" y="-10%" width="120%" height="120%"><feGaussianBlur stdDeviation="0.9"/></filter></defs>
<g clip-path="url(#av)"><g filter="url(#avb)">
<rect x="18" y="26" width="53" height="52" fill="#e6dfd2"/>
<rect x="26" y="28" width="10" height="13" fill="#efebe3"/>
<rect x="56" y="28" width="10" height="13" fill="#ece6dc"/>
<rect x="18" y="40.7" width="53" height="7" fill="#c5b292"/>
<rect x="55" y="40.7" width="16" height="17" fill="#c8b596"/>
<rect x="18" y="47.5" width="19" height="22" fill="#f0ede6"/>
<rect x="50" y="47" width="8" height="12" fill="#f2efe9"/>
<rect x="45" y="57" width="16" height="10" fill="#ece8e0"/>
<path d="M36.5,40 Q37,32 44.5,31.8 Q52,32 53,40 Q54.5,48 52.5,55.5 Q49,57 47,53 Q46,47 45.5,45.5 L41,45 Q37,44 36.5,40Z" fill="#4f3828"/>
<ellipse cx="43" cy="40.8" rx="2.3" ry="3.8" fill="#cf9f80"/>
<path d="M34,46.5 Q36,45 38,45.5 L45,46 Q46.5,52 45.5,58 L44.5,66.5 L36,66.5 Q33.5,56 34,46.5Z" fill="#f5f3ef"/>
<path d="M32.5,47.5 Q34,45.5 36,46.5 L36.5,63 Q34,64 32.5,60Z" fill="#cf9f80"/>
<path d="M47,54 L50.5,57 L51,67 L48,67Z" fill="#cc9c7c"/>
<path d="M24,73 Q28,66.5 37,66 L45,65.5 Q52,60.5 58,61 Q61.5,64 61,71 L59,76 L24,76Z" fill="#c89676"/>
<path d="M18,72 L62,71 L62,80 L18,80Z" fill="#f2efe9"/>
</g></g>
<path d="M27.6,121.5 L44.1,108.2 L60.9,121.5" fill="none" stroke="#4aa0ee" stroke-width="2.75" stroke-linecap="round" stroke-linejoin="round" stroke-miterlimit="4" />
<path d="M32.1,119 V134.4 A3,3 0 0 0 35.1,137.4 H38 A2.5,2.5 0 0 0 40.5,134.9 V134.5 A3.65,3.65 0 0 1 47.8,134.5 V134.9 A2.5,2.5 0 0 0 50.3,137.4 H53 A3,3 0 0 0 56,134.4 V119" fill="none" stroke="#4aa0ee" stroke-width="2.75" stroke-linecap="round" stroke-linejoin="round" stroke-miterlimit="4" />
<path d="M32.1,205 V194.3 A11.95,11.95 0 0 1 56,194.3 V205" fill="none" stroke="#8b96a3" stroke-width="2.75" stroke-linecap="round" stroke-linejoin="round" stroke-miterlimit="4" />
<path d="M28,206.4 H60.3" fill="none" stroke="#8b96a3" stroke-width="2.75" stroke-linecap="round" stroke-linejoin="round" stroke-miterlimit="4" />
<path d="M39.9,206.6 A4.2,4.2 0 0 0 48.3,206.6" fill="none" stroke="#8b96a3" stroke-width="2.75" stroke-linecap="round" stroke-linejoin="round" stroke-miterlimit="4" />
<path d="M30.8,286.3 V262 A6,6 0 0 1 36.8,256 H51.4 A6,6 0 0 1 57.4,262 V276.8 A6,6 0 0 1 51.4,282.8 H36.5 Q32.8,282.8 30.8,286.3 Z" fill="none" stroke="#8b96a3" stroke-width="2.75" stroke-linecap="round" stroke-linejoin="round" stroke-miterlimit="4" />
<path d="M40.2,266.9 H48.9" fill="none" stroke="#8b96a3" stroke-width="2.75" stroke-linecap="round" stroke-linejoin="round" stroke-miterlimit="4" />
<path d="M40.2,272.2 H44.8" fill="none" stroke="#8b96a3" stroke-width="2.75" stroke-linecap="round" stroke-linejoin="round" stroke-miterlimit="4" />
<path d="M31.9,334.6 V333.8 A5,5 0 0 1 36.9,328.8 H51 A5,5 0 0 1 56,333.8 V334.6" fill="none" stroke="#8b96a3" stroke-width="2.75" stroke-linecap="round" stroke-linejoin="round" stroke-miterlimit="4" />
<path d="M31.9,346.8 V356.3 L43.9,350.4 L56,356.3 V346.8" fill="none" stroke="#8b96a3" stroke-width="2.75" stroke-linecap="round" stroke-linejoin="round" stroke-miterlimit="4" />
<path d="M31.90,337.40 L32.93,339.88 L35.61,340.09 L33.56,341.84 L34.19,344.46 L31.90,343.05 L29.61,344.46 L30.24,341.84 L28.19,340.09 L30.87,339.88Z" fill="#8b96a3" />
<path d="M43.90,337.40 L44.93,339.88 L47.61,340.09 L45.56,341.84 L46.19,344.46 L43.90,343.05 L41.61,344.46 L42.24,341.84 L40.19,340.09 L42.87,339.88Z" fill="#8b96a3" />
<path d="M56.00,337.40 L57.03,339.88 L59.71,340.09 L57.66,341.84 L58.29,344.46 L56.00,343.05 L53.71,344.46 L54.34,341.84 L52.29,340.09 L54.97,339.88Z" fill="#8b96a3" />
<path d="M30.8,407.5 A6,6 0 0 1 36.8,401.5 H51.4 A6,6 0 0 1 57.4,407.5 V422.3 A6,6 0 0 1 51.4,428.3 H36.8 A6,6 0 0 1 30.8,422.3 Z" fill="none" stroke="#8b96a3" stroke-width="2.75" stroke-linecap="round" stroke-linejoin="round" stroke-miterlimit="4" />
<path d="M30.8,406.8 H57.4" fill="none" stroke="#8b96a3" stroke-width="2.75" stroke-linecap="round" stroke-linejoin="round" stroke-miterlimit="4" />
<circle cx="39.2" cy="413.9" r="2.1" fill="#8b96a3"/>
<path d="M35.6,422.4 L39.2,418.3 L42.5,420.9 L47.2,416.6 L52.4,422.4 Z" fill="#8b96a3" stroke="#8b96a3" stroke-width="0.80" stroke-linecap="round" stroke-linejoin="round" stroke-miterlimit="4" />
<path d="M30.8,479 A5,5 0 0 1 35.8,474 H52.4 A5,5 0 0 1 57.4,479 V495.7 A5,5 0 0 1 52.4,500.7 H35.8 A5,5 0 0 1 30.8,495.7 Z" fill="none" stroke="#8b96a3" stroke-width="2.75" stroke-linecap="round" stroke-linejoin="round" stroke-miterlimit="4" />
<path d="M30.8,480.4 H57.4" fill="none" stroke="#8b96a3" stroke-width="2.75" stroke-linecap="round" stroke-linejoin="round" stroke-miterlimit="4" />
<path d="M36,470.6 V473.5" fill="none" stroke="#8b96a3" stroke-width="2.75" stroke-linecap="round" stroke-linejoin="round" stroke-miterlimit="4" />
<path d="M52.3,470.6 V473.5" fill="none" stroke="#8b96a3" stroke-width="2.75" stroke-linecap="round" stroke-linejoin="round" stroke-miterlimit="4" />
<circle cx="36.0" cy="485.9" r="1.5" fill="#8b96a3"/>
<circle cx="41.4" cy="485.9" r="1.5" fill="#8b96a3"/>
<circle cx="46.7" cy="485.9" r="1.5" fill="#8b96a3"/>
<circle cx="52.1" cy="485.9" r="1.5" fill="#8b96a3"/>
<path d="M30.8,552 A5.3,5.3 0 0 1 36.1,546.7 H52.1 A5.3,5.3 0 0 1 57.4,552 V568 A5.3,5.3 0 0 1 52.1,573.3 H36.1 A5.3,5.3 0 0 1 30.8,568 Z" fill="none" stroke="#8b96a3" stroke-width="2.75" stroke-linecap="round" stroke-linejoin="round" stroke-miterlimit="4" />
<path d="M37.4,562.2 V566.6" fill="none" stroke="#8b96a3" stroke-width="2.75" stroke-linecap="round" stroke-linejoin="round" stroke-miterlimit="4" />
<path d="M43.9,552.8 V566.6" fill="none" stroke="#8b96a3" stroke-width="2.75" stroke-linecap="round" stroke-linejoin="round" stroke-miterlimit="4" />
<path d="M50.7,558 V566.6" fill="none" stroke="#8b96a3" stroke-width="2.75" stroke-linecap="round" stroke-linejoin="round" stroke-miterlimit="4" />
<path d="M57.2,621.8 A5.3,5.3 0 0 0 52.1,618.9 H36.1 A5.3,5.3 0 0 0 30.8,624.2 V640.2 A5.3,5.3 0 0 0 36.1,645.5 H52.1 A5.3,5.3 0 0 0 57.4,640.2 V634.4" fill="none" stroke="#f7f7f7" stroke-width="2.75" stroke-linecap="round" stroke-linejoin="round" stroke-miterlimit="4" />
<path d="M32.3,641.8 L42.5,631.5 L48,636.2 L56.2,628" fill="none" stroke="#f7f7f7" stroke-width="2.75" stroke-linecap="round" stroke-linejoin="round" stroke-miterlimit="4" />
<path d="M52.3,624.4 L59.9,624.4 L59.9,632 Z" fill="#f7f7f7" stroke="#f7f7f7" stroke-width="0.60" stroke-linecap="round" stroke-linejoin="round" stroke-miterlimit="4" />
<circle cx="44.1" cy="705" r="14.5" fill="none" stroke="#8b96a3" stroke-width="2.75"/>
<circle cx="44.1" cy="704.7" r="3.9" fill="none" stroke="#8b96a3" stroke-width="2.75"/>
<path d="M39.2,718.6 A5,5 0 0 1 49,718.6" fill="none" stroke="#8b96a3" stroke-width="2.75" stroke-linecap="round" stroke-linejoin="round" stroke-miterlimit="4" />
<circle cx="44.1" cy="777.2" r="14.7" fill="none" stroke="#8b96a3" stroke-width="2.75"/>
<circle cx="38.0" cy="777.4" r="2.0" fill="#8b96a3"/>
<circle cx="44.0" cy="777.4" r="2.0" fill="#8b96a3"/>
<circle cx="50.1" cy="777.4" r="2.0" fill="#8b96a3"/>
<path d="M46.6,851.2 V869.6 M37.1,860.4 H56.2" fill="none" stroke="#ffffff" stroke-width="2.60" stroke-linecap="round" stroke-linejoin="round" stroke-miterlimit="4" />
<path d="M402.2,36.3 H382.5 M392.5,26.8 L382.5,36.3 L392.5,45.8" fill="none" stroke="#f7f7f7" stroke-width="2.40" stroke-linecap="round" stroke-linejoin="round" stroke-miterlimit="4" />
<path d="M1095.3,45.2 A10.5,10.5 0 1 1 1100.6,45 L1097.1,49.4 Z" fill="none" stroke="#f7f7f7" stroke-width="2.40" stroke-linecap="round" stroke-linejoin="round" stroke-miterlimit="4" />
<path d="M1093.7,32.4 A3.65,3.65 0 1 1 1100.4,34.3 Q1097.3,35.6 1097.3,37.4" fill="none" stroke="#f7f7f7" stroke-width="2.50" stroke-linecap="round" stroke-linejoin="round" stroke-miterlimit="4" />
<circle cx="1097.35" cy="40.9" r="1.75" fill="#f7f7f7"/>
<path d="M1089.1,252 L1097.3,260.3 L1105.5,252" fill="none" stroke="#8b96a3" stroke-width="2.40" stroke-linecap="round" stroke-linejoin="round" stroke-miterlimit="4" />
<path d="M683.5,399.5 L694.6,388.4 M686.2,388.4 H694.6 V396.8" fill="none" stroke="#5fc76c" stroke-width="1.70" stroke-linecap="round" stroke-linejoin="round" stroke-miterlimit="4" />
<path d="M378.00,487.50 L399.25,450.00 L420.50,512.50 L441.75,433.00 L463.00,504.50 L484.25,510.00 L505.50,462.00 L526.75,460.00 L548.00,468.75 L569.25,503.75 L590.50,498.75 L611.75,510.50 L633.00,494.50 L654.25,496.25 L675.50,471.25 L696.75,510.00 L718.00,494.50 L739.25,480.50 L760.50,500.75 L781.75,514.25 L803.00,520.50 L824.25,475.00 L845.50,484.50 L866.75,476.25 L888.00,513.25 L909.25,490.75 L930.50,512.50 L951.75,515.75 L973.00,503.75 L994.25,491.25 L1015.50,478.75 L1036.75,540.00 L1036.75,545.5 L378,545.5 Z" fill="rgba(76,174,238,0.12)" />
<path d="M378.00,487.50 L399.25,450.00 L420.50,512.50 L441.75,433.00 L463.00,504.50 L484.25,510.00 L505.50,462.00 L526.75,460.00 L548.00,468.75 L569.25,503.75 L590.50,498.75 L611.75,510.50 L633.00,494.50 L654.25,496.25 L675.50,471.25 L696.75,510.00 L718.00,494.50 L739.25,480.50 L760.50,500.75 L781.75,514.25 L803.00,520.50 L824.25,475.00 L845.50,484.50 L866.75,476.25 L888.00,513.25 L909.25,490.75 L930.50,512.50 L951.75,515.75 L973.00,503.75 L994.25,491.25 L1015.50,478.75 L1036.75,540.00" fill="none" stroke="#4caeee" stroke-width="2.40" stroke-linecap="butt" stroke-linejoin="miter" stroke-miterlimit="4" />
<path d="M378.00,605.00 L399.25,599.50 L420.50,608.75 L441.75,602.00 L463.00,606.25 L484.25,602.00 L505.50,585.50 L526.75,600.75 L548.00,606.25 L569.25,608.75 L590.50,608.00 L611.75,604.50 L633.00,603.75 L654.25,606.25 L675.50,607.00 L696.75,600.00 L718.00,604.25 L739.25,605.50 L760.50,608.00 L781.75,610.00 L803.00,609.50 L824.25,606.25 L845.50,594.50 L866.75,603.75 L888.00,607.00 L909.25,607.00 L930.50,608.00 L951.75,607.00 L973.00,605.50 L994.25,602.50 L1015.50,601.75 L1036.75,613.00 L1036.75,613.25 L378,613.25 Z" fill="rgba(141,150,159,0.09)" />
<path d="M378.00,605.00 L399.25,599.50 L420.50,608.75 L441.75,602.00 L463.00,606.25 L484.25,602.00 L505.50,585.50 L526.75,600.75 L548.00,606.25 L569.25,608.75 L590.50,608.00 L611.75,604.50 L633.00,603.75 L654.25,606.25 L675.50,607.00 L696.75,600.00 L718.00,604.25 L739.25,605.50 L760.50,608.00 L781.75,610.00 L803.00,609.50 L824.25,606.25 L845.50,594.50 L866.75,603.75 L888.00,607.00 L909.25,607.00 L930.50,608.00 L951.75,607.00 L973.00,605.50 L994.25,602.50 L1015.50,601.75 L1036.75,613.00" fill="none" stroke="#8d969f" stroke-width="2.00" stroke-linecap="butt" stroke-linejoin="miter" stroke-miterlimit="4" />
<circle cx="1102.50" cy="801.60" r="1.20" fill="#9aa3ad"/>
<circle cx="1108.02" cy="803.88" r="1.35" fill="#9aa3ad"/>
<circle cx="1110.30" cy="809.40" r="1.55" fill="#9aa3ad"/>
<circle cx="1108.02" cy="814.92" r="1.70" fill="#9aa3ad"/>
<circle cx="1102.50" cy="817.20" r="1.85" fill="#9aa3ad"/>
<circle cx="1096.98" cy="814.92" r="1.95" fill="#9aa3ad"/>
<circle cx="1094.70" cy="809.40" r="1.35" fill="#9aa3ad"/>
<circle cx="1096.98" cy="803.88" r="1.30" fill="#9aa3ad"/>
<circle cx="1102.50" cy="907.85" r="1.20" fill="#9aa3ad"/>
<circle cx="1108.02" cy="910.13" r="1.35" fill="#9aa3ad"/>
<circle cx="1110.30" cy="915.65" r="1.55" fill="#9aa3ad"/>
<circle cx="1108.02" cy="921.17" r="1.70" fill="#9aa3ad"/>
<circle cx="1102.50" cy="923.45" r="1.85" fill="#9aa3ad"/>
<circle cx="1096.98" cy="921.17" r="1.95" fill="#9aa3ad"/>
<circle cx="1094.70" cy="915.65" r="1.35" fill="#9aa3ad"/>
<circle cx="1096.98" cy="910.13" r="1.30" fill="#9aa3ad"/>
<circle cx="1102.50" cy="1014.10" r="1.20" fill="#9aa3ad"/>
<circle cx="1108.02" cy="1016.38" r="1.35" fill="#9aa3ad"/>
<circle cx="1110.30" cy="1021.90" r="1.55" fill="#9aa3ad"/>
<circle cx="1108.02" cy="1027.42" r="1.70" fill="#9aa3ad"/>
<circle cx="1102.50" cy="1029.70" r="1.85" fill="#9aa3ad"/>
<circle cx="1096.98" cy="1027.42" r="1.95" fill="#9aa3ad"/>
<circle cx="1094.70" cy="1021.90" r="1.35" fill="#9aa3ad"/>
<circle cx="1096.98" cy="1016.38" r="1.30" fill="#9aa3ad"/>
<circle cx="1102.50" cy="1120.35" r="1.20" fill="#9aa3ad"/>
<circle cx="1108.02" cy="1122.63" r="1.35" fill="#9aa3ad"/>
<circle cx="1110.30" cy="1128.15" r="1.55" fill="#9aa3ad"/>
<circle cx="1108.02" cy="1133.67" r="1.70" fill="#9aa3ad"/>
<circle cx="1102.50" cy="1135.95" r="1.85" fill="#9aa3ad"/>
<circle cx="1096.98" cy="1133.67" r="1.95" fill="#9aa3ad"/>
<circle cx="1094.70" cy="1128.15" r="1.35" fill="#9aa3ad"/>
<circle cx="1096.98" cy="1122.63" r="1.30" fill="#9aa3ad"/>
<path d="M1186.50,61.30 L1188.67,66.61 L1194.39,67.04 L1190.02,70.74 L1191.38,76.31 L1186.50,73.30 L1181.62,76.31 L1182.98,70.74 L1178.61,67.04 L1184.33,66.61Z" fill="#4fb0ec" stroke="#4fb0ec" stroke-width="1.40" stroke-linecap="round" stroke-linejoin="round" stroke-miterlimit="4" />
<circle cx="1401.9" cy="211.9" r="7.2" fill="none" stroke="#8b96a3" stroke-width="1.8"/>
<path d="M1401.9,212.2 V215.4" fill="none" stroke="#8b96a3" stroke-width="1.90" stroke-linecap="round" stroke-linejoin="round" stroke-miterlimit="4" />
<circle cx="1401.9" cy="209" r="1.0" fill="#8b96a3"/>
<path d="M1525.6,272.3 L1533.7,280.4 L1541.8,272.3" fill="none" stroke="#8b96a3" stroke-width="2.30" stroke-linecap="round" stroke-linejoin="round" stroke-miterlimit="4" />
<path d="M1193.90,555.00 L1205.50,543.40 M1197.30,543.40 H1205.50 V551.40" fill="none" stroke="#5fc76c" stroke-width="1.75" stroke-linecap="round" stroke-linejoin="round" stroke-miterlimit="4" />
<path d="M1193.90,673.10 L1205.50,684.70 M1197.30,684.70 H1205.50 V676.70" fill="none" stroke="#ec6a63" stroke-width="1.75" stroke-linecap="round" stroke-linejoin="round" stroke-miterlimit="4" />
<path d="M1193.90,813.10 L1205.50,801.50 M1197.30,801.50 H1205.50 V809.50" fill="none" stroke="#5fc76c" stroke-width="1.75" stroke-linecap="round" stroke-linejoin="round" stroke-miterlimit="4" />
<path d="M1298.30,912.10 L1309.90,900.50 M1301.70,900.50 H1309.90 V908.50" fill="none" stroke="#5fc76c" stroke-width="1.75" stroke-linecap="round" stroke-linejoin="round" stroke-miterlimit="4" />
<path d="M1379.50,520.81 L1384.94,488.16 L1390.38,548.13 L1395.82,472.13 L1401.25,533.28 L1406.69,538.03 L1412.13,502.41 L1417.57,500.39 L1423.01,507.16 L1428.45,533.88 L1433.89,529.72 L1439.33,538.63 L1444.76,525.56 L1450.20,527.34 L1455.64,505.97 L1461.08,539.22 L1466.52,526.99 L1471.96,514.88 L1477.40,529.72 L1482.84,541.59 L1488.27,546.34 L1493.71,510.72 L1499.15,519.03 L1504.59,512.50 L1510.03,543.38 L1515.47,522.00 L1520.91,539.81 L1526.35,542.19 L1531.78,532.69 L1537.22,523.19 L1542.66,513.69 L1548.10,560.00" fill="none" stroke="#939ca6" stroke-width="2.40" stroke-linecap="butt" stroke-linejoin="miter" stroke-miterlimit="4" />
<path d="M1379.50,671.59 L1384.94,673.97 L1390.38,683.47 L1395.82,670.41 L1401.25,669.58 L1406.69,662.09 L1412.13,605.69 L1417.57,673.97 L1423.01,681.69 L1428.45,683.47 L1433.89,679.31 L1439.33,668.63 L1444.76,659.72 L1450.20,677.53 L1455.64,680.50 L1461.08,633.00 L1466.52,674.56 L1471.96,665.06 L1477.40,672.19 L1482.84,686.44 L1488.27,681.69 L1493.71,679.31 L1499.15,639.53 L1504.59,650.22 L1510.03,673.97 L1515.47,679.91 L1520.91,679.91 L1526.35,675.75 L1531.78,673.38 L1537.22,652.00 L1542.66,661.50 L1548.10,691.78" fill="none" stroke="#8bc34a" stroke-width="2.40" stroke-linecap="butt" stroke-linejoin="miter" stroke-miterlimit="4" />
<path d="M1379.50,821.69 L1384.94,816.94 L1390.38,822.88 L1395.82,820.74 L1401.25,822.28 L1406.69,822.28 L1412.13,816.34 L1417.57,819.08 L1423.01,817.89 L1428.45,745.09 L1433.89,822.88 L1439.33,822.64 L1444.76,810.41 L1450.20,810.76 L1455.64,815.75 L1461.08,812.78 L1466.52,811.95 L1471.96,822.64 L1477.40,822.64 L1482.84,821.93 L1488.27,809.22 L1493.71,822.88 L1499.15,777.16 L1504.59,821.09 L1510.03,819.55 L1515.47,821.09 L1520.91,822.88 L1526.35,820.50 L1531.78,814.56 L1537.22,814.80 L1542.66,797.34 L1548.10,822.28" fill="none" stroke="#9b7ed6" stroke-width="2.40" stroke-linecap="butt" stroke-linejoin="miter" stroke-miterlimit="4" />
<path d="M1379.50,893.94 L1384.94,873.75 L1390.38,910.56 L1395.82,861.88 L1401.25,902.25 L1406.69,906.41 L1412.13,886.81 L1417.57,880.64 L1423.01,885.03 L1428.45,917.69 L1433.89,898.69 L1439.33,906.05 L1444.76,899.88 L1450.20,899.64 L1455.64,885.63 L1461.08,909.97 L1466.52,899.88 L1471.96,890.38 L1477.40,900.47 L1482.84,906.41 L1488.27,912.94 L1493.71,885.63 L1499.15,902.25 L1504.59,889.19 L1510.03,908.78 L1515.47,895.13 L1520.91,905.81 L1526.35,908.19 L1531.78,903.44 L1537.22,898.69 L1542.66,893.94 L1548.10,918.28" fill="none" stroke="#4db0ec" stroke-width="2.40" stroke-linecap="butt" stroke-linejoin="miter" stroke-miterlimit="4" />
</svg>
</body></html>
